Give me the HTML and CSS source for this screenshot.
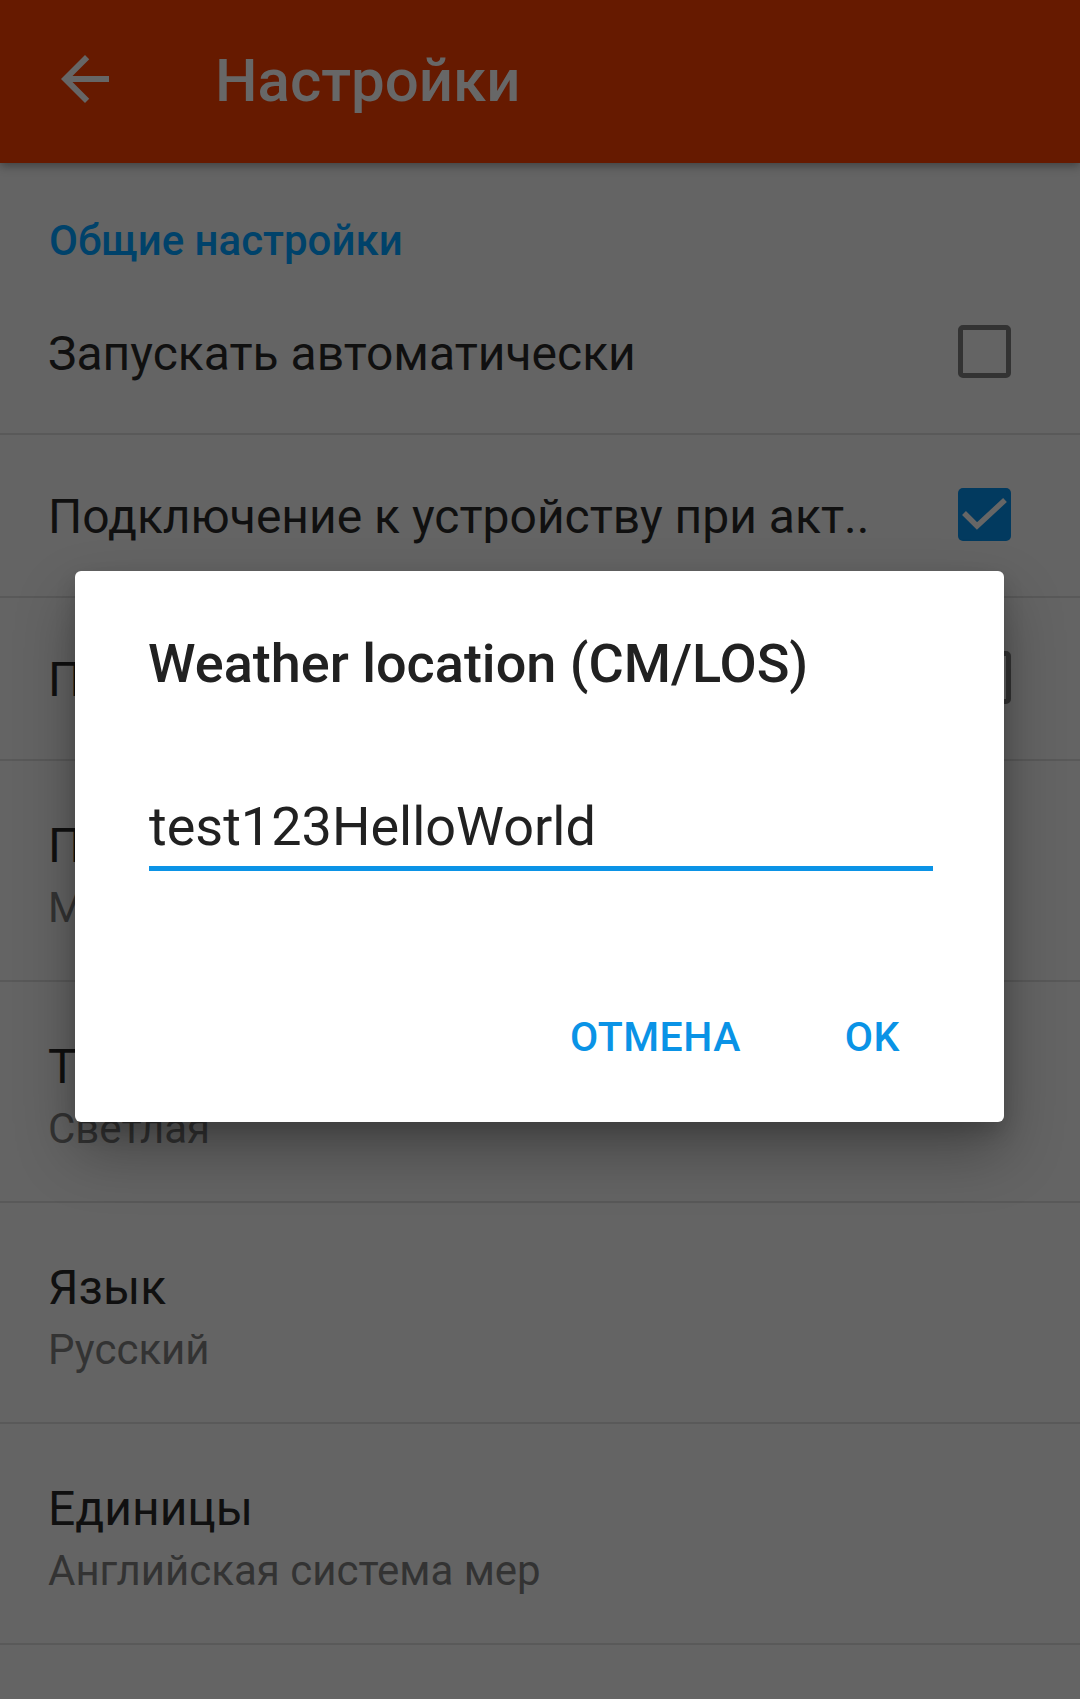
FILE: index.html
```html
<!DOCTYPE html>
<html lang="ru">
<head>
<meta charset="utf-8">
<title>Настройки</title>
<link rel="stylesheet" href="styles.css">
</head>
<body>
<div class="screen">
  <header class="appbar">
    <svg class="back" viewBox="0 0 24 24" width="72" height="72"><path d="M20 11H7.83l5.59-5.59L12 4l-8 8 8 8 1.41-1.41L7.83 13H20v-2z"/></svg>
    <h1 class="appbar-title">Настройки</h1>
  </header>
  <main class="prefs">
    <div class="cat">Общие настройки</div>
    <div class="pref pref-check">
      <span class="pref-title">Запускать автоматически</span>
      <span class="checkbox"></span>
    </div>
    <div class="pref pref-check">
      <span class="pref-title">Подключение к устройству при акт..</span>
      <span class="checkbox checked"><svg viewBox="0 0 53 53" width="53" height="53"><path d="M6 25 L19 38 L47 12" /></svg></span>
    </div>
    <div class="pref pref-check">
      <span class="pref-title">Переподключаться автоматически</span>
      <span class="checkbox"></span>
    </div>
    <div class="pref pref-sum">
      <div class="pref-title">Предпочтительный плеер</div>
      <div class="pref-summary">Музыкальный плеер по умолчанию</div>
    </div>
    <div class="pref pref-sum">
      <div class="pref-title">Тема</div>
      <div class="pref-summary">Светлая</div>
    </div>
    <div class="pref pref-sum">
      <div class="pref-title">Язык</div>
      <div class="pref-summary">Русский</div>
    </div>
    <div class="pref pref-sum">
      <div class="pref-title">Единицы</div>
      <div class="pref-summary">Английская система мер</div>
    </div>
  </main>
  <div class="dialog">
    <div class="dialog-title">Weather location (CM/LOS)</div>
    <div class="dialog-input">test123HelloWorld</div>
    <div class="dialog-actions">
      <span class="btn">Отмена</span>
      <span class="btn">OK</span>
    </div>
  </div>
</div>
</body>
</html>
```
FILE: styles.css
```css
html, body {
  margin: 0;
  padding: 0;
}
body {
  width: 1080px;
  height: 1699px;
  overflow: hidden;
  background: #646464;
  font-family: Roboto, "Noto Sans", "Liberation Sans", sans-serif;
}
.screen {
  position: relative;
  width: 1080px;
  height: 1699px;
}
.appbar {
  position: relative;
  z-index: 1;
  height: 163px;
  box-sizing: border-box;
  padding-top: 43px;
  background: #661a00;
  display: flex;
  align-items: flex-start;
  box-shadow: 0 3px 9px rgba(0, 0, 0, 0.35);
}
.back {
  margin-left: 49px;
  fill: #666666;
  flex: none;
}
.appbar-title {
  margin: 3px 0 0 94px;
  font-size: 60px;
  line-height: 70px;
  font-weight: 500;
  color: #676767;
}
.cat {
  height: 109px;
  box-sizing: border-box;
  padding: 53px 0 0 49px;
  font-size: 42px;
  line-height: 50px;
  font-weight: 500;
  color: #00426a;
}
.pref {
  box-sizing: border-box;
  border-bottom: 2px solid #595959;
  padding-left: 48px;
  padding-right: 69px;
}
.pref-title {
  font-size: 48px;
  line-height: 58px;
  color: #101010;
  white-space: nowrap;
}
.pref-check {
  height: 163px;
  display: flex;
  align-items: center;
  padding-top: 3px;
}
.pref-check .pref-title {
  flex: 1;
  overflow: hidden;
}
.checkbox {
  flex: none;
  width: 53px;
  height: 53px;
  box-sizing: border-box;
  border: 5.5px solid #333333;
  border-radius: 5px;
  margin-top: -5px;
}
.checkbox.checked {
  border: none;
  background: #023a5f;
}
.checkbox svg {
  display: block;
  fill: none;
  stroke: #666666;
  stroke-width: 5.5;
}
.pref-sum {
  height: 221px;
  padding-top: 56px;
}
.pref-summary {
  margin-top: 3px;
  font-size: 42px;
  line-height: 60px;
  color: #333333;
  white-space: nowrap;
}
.dialog {
  position: absolute;
  left: 75px;
  top: 571px;
  width: 929px;
  height: 551px;
  box-sizing: border-box;
  padding: 62px 71px 0 73px;
  background: #ffffff;
  border-radius: 6px;
  box-shadow: 0 30px 60px rgba(0, 0, 0, 0.3), 0 10px 20px rgba(0, 0, 0, 0.15);
  z-index: 2;
}
.dialog-title {
  font-size: 54px;
  line-height: 62px;
  font-weight: 500;
  color: #212121;
  white-space: nowrap;
}
.dialog-input {
  margin-top: 101px;
  margin-left: 1px;
  font-size: 54px;
  line-height: 62px;
  color: #212121;
  padding-bottom: 8px;
  border-bottom: 5px solid #0b93e6;
}
.dialog-actions {
  margin-top: 144px;
  display: flex;
  justify-content: flex-end;
  gap: 104px;
  padding-right: 33px;
}
.btn {
  font-size: 41px;
  line-height: 44px;
  font-weight: 500;
  letter-spacing: 0.5px;
  text-transform: uppercase;
  color: #0a93e6;
}
```
